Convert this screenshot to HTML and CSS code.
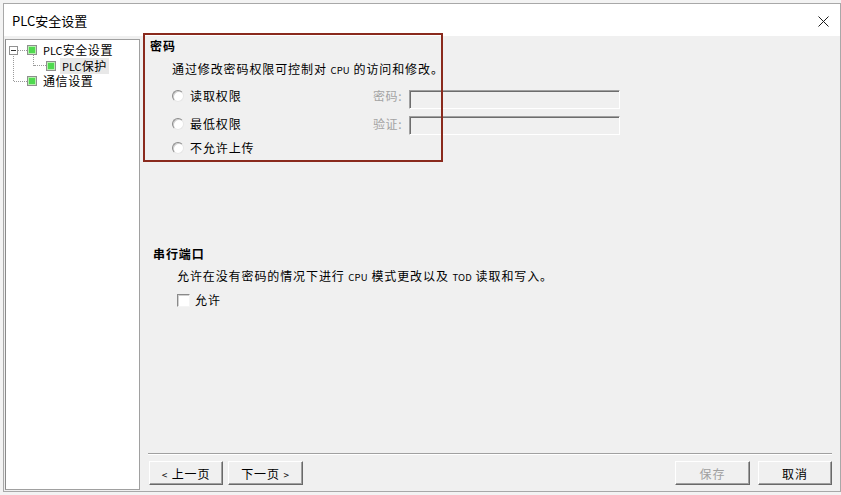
FILE: index.html
```html
<!DOCTYPE html>
<html lang="zh-CN">
<head>
<meta charset="utf-8">
<title>PLC安全设置</title>
<link rel="stylesheet" href="styles.css">
</head>
<body>
<div class="window">
  <div class="titlebar">
    <span class="title">PLC安全设置</span>
    <svg class="close" width="11" height="11" viewBox="0 0 11 11"><path d="M0.5 0.5 L10.5 10.5 M10.5 0.5 L0.5 10.5" stroke="#1a1a1a" stroke-width="1" fill="none"/></svg>
  </div>
  <div class="wbody">
    <div class="tree">
      <ul class="tv">
        <li>
          <div class="tv-row r1"><span class="exp"></span><span class="hl"></span><span class="ico"></span><span class="lbl"><span class="tl">PLC</span>安全设置</span></div>
          <ul class="tv-sub">
            <li><div class="tv-row r2"><span class="hl"></span><span class="ico"></span><span class="lbl sel"><span class="tl">PLC</span>保护</span></div></li>
          </ul>
        </li>
        <li><div class="tv-row r3"><span class="hl"></span><span class="ico"></span><span class="lbl">通信设置</span></div></li>
      </ul>
    </div>
    <div class="main">
      <section class="sec-pw">
        <h2 class="head">密码</h2>
        <p class="desc">通过修改密码权限可控制对 <span class="sm">CPU</span> 的访问和修改。</p>
        <div class="prow row1">
          <label class="opt"><span class="radio"></span>读取权限</label>
          <span class="flabel">密码:</span><span class="field"></span>
        </div>
        <div class="prow row2">
          <label class="opt"><span class="radio"></span>最低权限</label>
          <span class="flabel">验证:</span><span class="field"></span>
        </div>
        <div class="prow row3">
          <label class="opt"><span class="radio"></span>不允许上传</label>
        </div>
      </section>
      <section class="sec-serial">
        <h2 class="head">串行端口</h2>
        <p class="desc2">允许在没有密码的情况下进行 <span class="sm">CPU</span> 模式更改以及 <span class="sm">TOD</span> 读取和写入。</p>
        <label class="chkrow"><span class="check"></span>允许</label>
      </section>
      <div class="footer">
        <button class="btn b-prev"><span class="arr">&lt;</span> 上一页</button>
        <button class="btn b-next">下一页 <span class="arr">&gt;</span></button>
        <span class="grow"></span>
        <button class="btn b-save" disabled>保存</button>
        <button class="btn b-cancel">取消</button>
      </div>
    </div>
  </div>
  <div class="annot"></div>
</div>
</body>
</html>
```
FILE: styles.css
```css
html, body {
  margin: 0;
  height: 100%;
}
body {
  box-sizing: border-box;
  padding: 3px 0 0 3px;
  background: #f3f3f3;
  font-family: "Noto Sans CJK SC", "Noto Sans", sans-serif;
  font-size: 12px;
  color: #000;
  overflow: hidden;
}
.window {
  position: relative;
  box-sizing: border-box;
  width: 838px;
  height: 489px;
  border: 1px solid #a8a8a8;
  background: #f0f0f0;
  display: flex;
  flex-direction: column;
}
.titlebar {
  height: 32px;
  flex: none;
  background: #fff;
  display: flex;
  align-items: center;
  padding-left: 8px;
  padding-right: 11px;
}
.title {
  font-size: 13px;
  line-height: 16px;
  margin-top: 2px;
  flex: 1;
}
.close {
  margin-top: 3px;
}
.wbody {
  flex: 1;
  display: flex;
  min-height: 0;
}
/* tree */
.tree {
  position: relative;
  box-sizing: border-box;
  width: 135px;
  height: 451px;
  margin: 3px 0 0 1px;
  background: #fff;
  border: 1px solid #a0a0a0;
  border-left-color: #8a8a8a;
  letter-spacing: 0.6px;
}
.tv, .tv-sub {
  list-style: none;
  margin: 0;
  padding: 0;
  position: relative;
}
.tv {
  padding-top: 2px;
}
.tv::before {
  content: "";
  position: absolute;
  left: 7px;
  top: 14px;
  height: 27px;
  border-left: 1px dotted #9a9a9a;
}
.tv-sub::before {
  content: "";
  position: absolute;
  left: 27px;
  top: -4px;
  height: 12px;
  border-left: 1px dotted #9a9a9a;
}
.tv-row {
  display: flex;
  align-items: center;
  height: 16px;
  line-height: 16px;
  white-space: nowrap;
}
.r1 { padding-left: 3px; }
.r2 { padding-left: 28px; height: 15px; }
.r3 { padding-left: 8px; }
.exp {
  position: relative;
  box-sizing: border-box;
  width: 9px;
  height: 9px;
  border: 1px solid #919191;
  background: #fff;
}
.exp::after {
  content: "";
  position: absolute;
  left: 1px;
  top: 3px;
  width: 5px;
  height: 1px;
  background: #333;
}
.hl {
  height: 0;
  border-top: 1px dotted #9a9a9a;
}
.r1 .hl { width: 9px; }
.r2 .hl { width: 12px; }
.r3 .hl { width: 13px; }
.ico {
  box-sizing: border-box;
  width: 10px;
  height: 10px;
  border: 1px solid #8e8e8e;
  background: #4fd94f;
  box-shadow: inset 0 0 0 1px #b6efae;
}
.lbl {
  margin-left: 6px;
}
.tl {
  font-size: 11px;
  letter-spacing: 0;
}
.lbl.sel {
  margin-left: 4px;
  padding: 0 2px;
  background: #e8e8e8;
}
/* main */
.main {
  flex: 1;
  display: flex;
  flex-direction: column;
  padding: 2px 8px 6px 10px;
  letter-spacing: 0.9px;
}
.head {
  margin: 0;
  font-size: 12px;
  font-weight: bold;
  line-height: 16px;
}
.sm {
  font-size: 9.5px;
  letter-spacing: 0.2px;
}
.desc {
  margin: 7px 0 0 22px;
  line-height: 16px;
}
.prow {
  display: flex;
  align-items: flex-start;
  padding-left: 22px;
  height: 21px;
  line-height: 16px;
}
.row1 { margin-top: 10px; }
.row2 { margin-top: 7px; }
.row3 { margin-top: 3px; height: 16px; }
.opt {
  display: flex;
  align-items: center;
  width: 201px;
  flex: none;
}
.radio {
  box-sizing: border-box;
  width: 12px;
  height: 12px;
  margin-right: 6px;
  border-radius: 50%;
  border: 1px solid;
  border-color: #8a8a8a #e6e6e6 #e6e6e6 #8a8a8a;
  background: #fff;
  box-shadow: inset 1px 1px 0 #cfcfcf;
}
.flabel {
  width: 36px;
  color: #a3a3a3;
  flex: none;
  letter-spacing: 0.6px;
}
.field {
  box-sizing: border-box;
  width: 211px;
  height: 19px;
  margin-top: 2px;
  border: 1px solid;
  border-color: #a0a0a0 #fff #fff #a0a0a0;
  box-shadow: inset 1px 1px 0 #6d6d6d;
  background: #f0f0f0;
}
.row2 .field { margin-top: 0; }
.sec-serial {
  margin-top: 90px;
  padding-left: 3px;
}
.desc2 {
  margin: 6px 0 0 24px;
  line-height: 16px;
}
.chkrow {
  display: flex;
  align-items: center;
  margin: 7px 0 0 24px;
  line-height: 16px;
}
.check {
  box-sizing: border-box;
  width: 13px;
  height: 13px;
  margin-right: 5px;
  border: 1px solid;
  border-color: #8a8a8a #f4f4f4 #f4f4f4 #8a8a8a;
  background: #fff;
  box-shadow: inset 1px 1px 0 #d0d0d0;
}
/* footer */
.footer {
  margin: auto 0 0 -2px;
  display: flex;
  border-top: 1px solid #a0a0a0;
  box-shadow: inset 0 1px 0 #fff;
  padding: 7px 0 0 1px;
}
.grow { flex: 1; }
.btn {
  box-sizing: border-box;
  height: 24px;
  width: 75px;
  padding: 0;
  font-family: inherit;
  font-size: 12px;
  letter-spacing: 0.9px;
  color: #000;
  background: #f0f0f0;
  border: 1px solid;
  border-color: #fff #696969 #696969 #fff;
  box-shadow: inset -1px -1px 0 #a0a0a0;
  border-radius: 0;
}
.b-prev { width: 74px; }
.b-next { margin-left: 5px; }
.b-save { color: #a0a0a0; }
.b-cancel { width: 74px; margin-left: 8px; }
.arr {
  font-size: 10px;
}
/* annotation overlay */
.annot {
  position: absolute;
  left: 139px;
  top: 29px;
  width: 300px;
  height: 129px;
  box-sizing: border-box;
  border: 2px solid #8a2a1d;
  pointer-events: none;
}
```
